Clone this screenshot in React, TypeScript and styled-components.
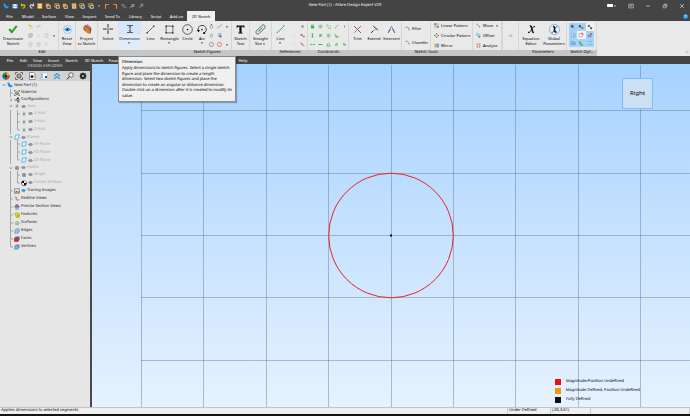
import React from "react";
import styled, { createGlobalStyle } from "styled-components";

const Global = createGlobalStyle`
  * { box-sizing: border-box; }
  html, body, #root { height: 100%; }
  body { margin: 0; overflow: hidden; background: #444444; }
  button { font: inherit; color: inherit; border: 0; padding: 0; margin: 0; background: none; }
`;

/* ---------- icons ---------- */

const art: Record<string, React.ReactNode> = {
  logo: <path d="M1 2c4-2 6 0 7 3s3 3 6 3c2 3 0 6-3 6H7C4 13 2 9 1 2z" fill="#2196f3" />,
  save: <><path d="M1 3h14v11H1z" fill="#6db8f0" /><path d="M4 3h8v4H4zM4 10h8v4H4z" fill="#fff" /></>,
  undo: <path d="M4 1v6h5M4 7c5-4 10-2 9 2-1 3-3 5-6 5" fill="none" stroke="#e2c51c" strokeWidth="3" />,
  redo: <path d="M12 1v6H7M12 7C7 3 2 5 3 9c1 3 3 5 6 5" fill="none" stroke="#d8d8d8" strokeWidth="3" />,
  redoGrey: <path d="M13 2v6H7M13 7C8 3 2 4 3 9c1 3 3 5 6 5" fill="none" stroke="#c3c3c3" strokeWidth="2" />,
  cube: <><path d="M2 2h9v3H5v6H2z" fill="#f5a623" /><path d="M6 6h8v9H6z" fill="none" stroke="#f0e2c0" strokeWidth="2" /><path d="M9 9h3v3H9z" fill="#f5a623" /></>,
  cubeFull: <><path d="M1 1h13v14H1z" fill="#f5b335" /><path d="M3 4h9M4 8h8M3 12h9" stroke="#fff0c8" strokeWidth="2" /></>,
  cubeLine: <><path d="M2 2h10v4M2 2v9h4" fill="none" stroke="#f5a623" strokeWidth="2" /><path d="M6 6h8v8H6z" fill="none" stroke="#eee" strokeWidth="2" /></>,
  cubeRed: <><path d="M2 1h12v8H2z" fill="#f5b335" /><path d="M3 9h11v6H3z" fill="#e7e7e7" /><path d="M6 10h5v3H6z" fill="#d58033" /></>,
  cornerL: <path d="M4 15V4h9" fill="none" stroke="#f08a1d" strokeWidth="3" />,
  cornerR: <path d="M3 4h9v11" fill="none" stroke="#f08a1d" strokeWidth="3" />,
  link: <path d="M3 3l4 2 6 7M2 6l7 7M3 3L2 6M13 12l-3 2" fill="none" stroke="#a9b6bd" strokeWidth="1.6" />,
  wrench: <path d="M2 14l6-6M8 4h5v5H8z" fill="none" stroke="#b9b9b9" strokeWidth="2" />,
  probe: <path d="M2 14l6-6M8 3h5v5H8z" fill="none" stroke="#aaa" strokeWidth="1.8" />,
  down: <path d="M4 6h8l-4 5z" fill="currentColor" />,
  check: <path d="M2 8l4 5 8-10" fill="none" stroke="#2aa336" strokeWidth="3.4" />,
  copy: <path d="M2 5h8v9H2zM6 5V2h8v9h-4M4 10h4" fill="none" stroke="#888" strokeWidth="1.4" />,
  cross: <path d="M4 4l8 8M12 4l-8 8" stroke="#c6c6c6" strokeWidth="1.5" />,
  paste: <path d="M3 3h10v11H3zM6 3V1h4v2M6 7h5M6 10h5" fill="none" stroke="#c3c3c3" strokeWidth="1.5" />,
  page: <><path d="M3 2h10v12H3z" fill="#ddd" stroke="#c3c3c3" strokeWidth="1.3" /><path d="M6 7h4M6 10h4" stroke="#bbb" /></>,
  cut: <path d="M3 4l9 7M3 11l9-7M2 3v2M2 11v2" fill="none" stroke="#c3c3c3" strokeWidth="1.5" />,
  view: <><circle cx="8" cy="8" r="7" fill="#fff" stroke="#79b5e8" strokeWidth="1.4" /><path d="M3 8c3-4 7-4 10 0-3 4-7 4-10 0z" fill="#2d9bf0" stroke="#2872b7" /><circle cx="8" cy="8" r="1.5" fill="#123" /></>,
  project: <><path d="M2 4l4-3 8 6v6l-4 3-8-7z" fill="#e58a1f" /><path d="M5 2l8 7v6" fill="none" stroke="#cc3c2e" strokeWidth="2" /><path d="M3 5l4 4v3L3 8z" fill="#2c76c9" /><path d="M8 1l6 5v5" fill="none" stroke="#35528e" strokeWidth="1.5" /></>,
  select: <><path d="M8 0v6M8 10v6M0 8h6M10 8h6" stroke="#222" strokeWidth="1.5" /><circle cx="8" cy="8" r="1" /></>,
  dimension: <path d="M2 1h12M2 15h12M8 2v12M6 5l2-2 2 2M6 11l2 2 2-2" fill="none" stroke="#222" strokeWidth="1.4" />,
  line: <><path d="M2 14L14 2" stroke="#333" strokeWidth="1.2" /><path d="M1 13h2v2H1zM13 1h2v2h-2z" /></>,
  rect: <><path d="M2 2h12v12H2z" fill="none" stroke="#333" strokeWidth="1.2" /><path d="M1 1h2v2H1zM13 1h2v2h-2zM1 13h2v2H1zM13 13h2v2h-2z" /></>,
  circle: <><circle cx="8" cy="8" r="7" fill="none" stroke="#333" strokeWidth="1.1" /><circle cx="8" cy="8" r="1.1" /></>,
  arc: <><path d="M2 10a6.500 6.500 0 1 1 10 4" fill="none" stroke="#333" strokeWidth="1.4" /><path d="M0 9l2 4 3-3zM10 13h3v3h-3zM7 8h2v2H7z" /></>,
  ellipse: <><ellipse cx="8" cy="9" rx="4" ry="6" fill="none" stroke="#666" strokeWidth="1.4" /><path d="M7 1h2v3H7z" /></>,
  partial: <path d="M11 3C1 2 3 15 11 13M9 8h4" fill="none" stroke="#555" strokeWidth="1.5" />,
  spline: <path d="M1 12c4-9 5 2 8-4 2-4 4-5 6-5M2 14h2M12 2h2" fill="none" stroke="#42a84b" strokeWidth="1.8" />,
  hatch: <><path d="M2 2l5 5-4 4M6 2h6v4" fill="none" stroke="#3880c6" strokeWidth="1.8" /><path d="M7 7h7v7H7z" fill="#596f80" /></>,
  hexagon: <path d="M4 2h8l3 6-3 6H4L1 8z" fill="none" stroke="#444" strokeWidth="1.4" />,
  hexred: <path d="M4 2h8l3 6-3 6H4L1 8z" fill="none" stroke="#e13434" strokeWidth="1.8" />,
  text: <path d="M1 1h14v4h-1c-1-2-2-2-4-2v10c0 1 1 1 2 1v1H4v-1c1 0 2 0 2-1V3C4 3 3 3 2 5H1z" fill="#111" />,
  slot: <><path d="M2 10l8-8c3-2 6 1 4 4l-8 8c-3 2-6-1-4-4z" fill="none" stroke="#555" strokeWidth="1.3" /><path d="M5 11l6-6" stroke="#42a84b" strokeWidth="1.5" /></>,
  refline: <path d="M2 14L14 2M1 13h2M13 1h2" stroke="#35aa43" strokeWidth="1.6" />,
  faintx: <path d="M3 3l3 3M13 3l-3 3M3 13l3-3M13 13l-3-3M8 7v2" stroke="#c6c6c6" strokeWidth="1.3" />,
  point: <><circle cx="8" cy="8" r="4" fill="#aaa" /><path d="M8 3v10M3 8h10" stroke="#777" /></>,
  fig: <><path d="M2 3h6v6H2z" fill="#777" /><path d="M7 8h7v6H7z" fill="#d99a7a" /><path d="M12 10h3v3h-3z" fill="#bb3b3b" /></>,
  fig2: <><path d="M2 2h5v5H2z" fill="#c77" /><path d="M5 8h5v6M9 8l5 6" fill="none" stroke="#777" strokeWidth="1.6" /></>,
  lock: <><path d="M3 7h10v7H3z" fill="#16b930" /><path d="M5 7V3h6v4" fill="none" stroke="#16b930" strokeWidth="2" /></>,
  conc: <><circle cx="8" cy="8" r="5" fill="none" stroke="#2dbd42" strokeWidth="2" /><circle cx="8" cy="8" r="2" fill="#2dbd42" /></>,
  tangent: <path d="M2 10a4 4 0 0 1 6-5M14 5a5 5 0 1 1-7 6M5 3l3 2" fill="none" stroke="#2dbd42" strokeWidth="2" />,
  slash: <path d="M3 13L13 3M3 13h2M13 3v2" fill="none" stroke="#2dbd42" strokeWidth="2" />,
  plus: <path d="M8 5v6" stroke="#2dbd42" strokeWidth="3" />,
  vert: <path d="M8 2v12M5 4h6M5 12h6" stroke="#16b930" strokeWidth="2.4" />,
  neq: <path d="M3 6h10M3 10h10M11 3L5 13" stroke="#16b930" strokeWidth="2" />,
  perp: <path d="M3 3l3 10h9M6 9l7 4" fill="none" stroke="#16b930" strokeWidth="2.2" />,
  horiz: <path d="M1 8h5M9 8h6" stroke="#16b930" strokeWidth="3" />,
  solid: <path d="M2 8h12" stroke="#16b930" strokeWidth="3" />,
  sym: <path d="M4 12V7l4-3 4 3v5M2 13h12" fill="none" stroke="#2dbd42" strokeWidth="2.4" />,
  par: <path d="M4 13l4-10M8 13l4-10" stroke="#2dbd42" strokeWidth="2.2" />,
  arrow: <path d="M3 3l9 5-5 5M9 8l-6 1" fill="none" stroke="#2dbd42" strokeWidth="2.4" />,
  trim: <><path d="M2 2l6 6M14 2L8 8l6 6" fill="none" stroke="#333" strokeWidth="1.3" /><path d="M8 8l-6 6M9 7l3-3" stroke="#d44" strokeWidth="1.3" /></>,
  extend: <><path d="M6 2l8 7M2 14l4-4" stroke="#222" strokeWidth="1.7" /><path d="M6 10l5-4" stroke="#3f91d6" strokeWidth="1.4" /></>,
  intersect: <><path d="M2 14l4-7M14 14l-4-7" stroke="#222" strokeWidth="1.5" /><path d="M5 8l3-6 3 6" fill="none" stroke="#3f91d6" strokeWidth="1.5" /></>,
  fillet: <><path d="M2 4h4M13 10v4" stroke="#333" strokeWidth="2" /><path d="M6 4c5 0 7 2 7 6" fill="none" stroke="#e33" strokeWidth="2" /></>,
  chamfer: <><path d="M2 4h4M13 10v4" stroke="#333" strokeWidth="2" /><path d="M6 4l7 6" stroke="#e33" strokeWidth="2" /></>,
  linpat: <><path d="M1 1h6v6H1zM9 9h6v6H9z" fill="#2378c4" /><path d="M9 1h6v6H9zM1 9h6v6H1z" fill="#f1bd2b" /><path d="M3 3l9 9" stroke="#80bcec" strokeWidth="2" /></>,
  circpat: <><circle cx="8" cy="8" r="5" fill="none" stroke="#e8b62a" strokeWidth="3" /><path d="M8 1v3M8 12v3M1 8h3M12 8h3" stroke="#1f6eb6" strokeWidth="3" /></>,
  mirror: <><path d="M1 2h6v12H1z" fill="#e7b42a" /><path d="M8 2h7v12H8z" fill="#2781cc" /><path d="M10 5h3v6h-3z" fill="#9ed1f4" /></>,
  move: <><path d="M3 2v5M1 4h5M11 10v5M9 12h5" stroke="#58a6dd" strokeWidth="1.5" /><path d="M5 5l7 7" stroke="#555" strokeWidth="1.5" /></>,
  offset: <><path d="M2 2h7l4 5v7H7V8H2z" fill="#d7e7f2" stroke="#58728c" strokeWidth="1.3" /><path d="M9 9h4v4H9z" fill="#2b8dd6" /></>,
  analyze: <path d="M2 3h5M4 3v10M2 13h5M9 3h5M12 3v10M9 13h5" fill="none" stroke="#ce4e4e" strokeWidth="2" />,
  folder: <path d="M2 6h5l1-2h6v9H2z" fill="#c8c8c8" />,
  equation: <><path d="M5 2c3-1 3 3 4 6s1 6 3 5" fill="none" stroke="#111" strokeWidth="2.8" /><path d="M14 3c-2-2-4 2-6 5s-4 7-6 5" fill="none" stroke="#111" strokeWidth="1.4" /><path d="M12 2h2v2h-2zM2 12h2v2H2z" /></>,
  global: <><circle cx="8" cy="8" r="7.3" fill="#e8f2fb" stroke="#5b9bd5" /><path d="M6 4c2-1 2 2 2 4s1 4 3 4" fill="none" stroke="#111" strokeWidth="2.2" /><path d="M12 4c-2-1-3 2-4 4s-2 5-4 4" fill="none" stroke="#111" strokeWidth="1.1" /></>,
  opt1: <path d="M3 3h6v6H3zM10 12h4" fill="#345" stroke="#5a7da0" />,
  opt2: <><path d="M2 3h6v6H2z" fill="#456" /><path d="M9 8h5v5H9z" fill="#d44" /></>,
  opt3: <path d="M3 3h4v4H3zM9 9h4v4H9zM7 7l2 2" fill="#444" stroke="#444" />,
  opt4: <path d="M3 3h7v9H3zM9 7h5v6H9z" fill="#d8e9f5" stroke="#4c8abb" />,
  opt5: <><path d="M3 4h8v9H3z" fill="#fff" stroke="#555" /><path d="M8 3l5 1v5" fill="none" stroke="#d33" strokeWidth="2" /></>,
  opt6: <><path d="M3 13l8-9M3 8h8v5H3z" fill="#9bb" stroke="#567" /><path d="M9 3l5 4" stroke="#d33" strokeWidth="3" /></>,
  opt7: <><circle cx="6" cy="8" r="4" fill="none" stroke="#357ba9" strokeWidth="1.5" /><path d="M10 7h5v5h-5z" fill="none" stroke="#357ba9" /></>,
  opt8: <path d="M4 3l2 10 7 1L5 8M4 3l4 8" fill="none" stroke="#24a447" strokeWidth="1.8" />,
  opt9: <path d="M2 4h4M8 4h5M3 12h3M9 12h5" stroke="#578fc0" strokeWidth="1.6" />,
  wheel: <><circle cx="8" cy="8" r="7" fill="#1c9b50" /><path d="M8 8V1a7 7 0 0 1 7 7z" fill="#f0c22d" /><path d="M8 8h7a7 7 0 0 1-7 7z" fill="#e4482e" /><path d="M8 8v7a7 7 0 0 1-7-7z" fill="#2677c6" /><path d="M8 1v14M1 8h14" stroke="#222" strokeWidth="1.2" /><circle cx="8" cy="8" r="2" fill="#222" /></>,
  material: <><path d="M1 5V1h4M11 1h4v4M15 11v4h-4M5 15H1v-4" fill="none" stroke="#444" strokeWidth="1.5" /><circle cx="8" cy="8" r="5" fill="#3d6c8c" /><path d="M6 5h5v3l-3 4-3-4z" fill="#e9a22b" /></>,
  doc: <><path d="M3 1h8l3 3v11H3z" fill="#fff" stroke="#555" strokeWidth="1.2" /><circle cx="8" cy="9" r="3" fill="#222" /></>,
  window: <><path d="M1 2h14v12H1z" fill="#fff" stroke="#8bbad9" /><path d="M2 3h4v10H2z" fill="#8fc5ea" /><path d="M10 8h4v4h-4z" fill="#444" /></>,
  upup: <path d="M2 8l6-5 6 5M2 14l6-5 6 5" fill="none" stroke="#2c9aeb" strokeWidth="2.2" />,
  search: <><circle cx="10" cy="6" r="4.5" fill="#eee" stroke="#333" strokeWidth="1.3" /><path d="M7 9l-5 6" stroke="#333" strokeWidth="2" /></>,
  gear: <><circle cx="8" cy="8" r="4" fill="none" stroke="#222" strokeWidth="4" /><path d="M8 1v3M8 12v3M1 8h3M12 8h3M3 3l2 2M11 11l2 2M13 3l-2 2M5 11l-2 2" stroke="#222" strokeWidth="2" /></>,
  config: <><path d="M1 8h5l3-5M6 8h3l2 5" fill="none" stroke="#333" strokeWidth="1.8" /><path d="M8 1h5v4H8z" fill="#333" /><path d="M10 6h5v4h-5z" fill="#278b5b" /><path d="M9 11h5v4H9z" fill="#c04141" /></>,
  axis: <><path d="M8 2v12" stroke="#6db87e" strokeWidth="1.6" /><path d="M3 4l10 8" stroke="#e29a83" strokeWidth="1.6" /><path d="M3 12l10-8" stroke="#58b1e8" strokeWidth="1.6" /><circle cx="8" cy="8" r="2" fill="#477" /></>,
  plane: <path d="M4 3l10-1-2 11-10 1z" fill="#e5f5fc" stroke="#3aa7e4" strokeWidth="2" />,
  eye: <path d="M1 8c4-5 10-5 14 0-4 5-10 5-14 0z" fill="#8e999b" stroke="#666" />,
  eyeblue: <path d="M1 8c4-5 10-5 14 0-4 5-10 5-14 0z" fill="#2d9eec" stroke="#2383c6" />,
  points: <path d="M4 4h8v8H4zM3 8h10M8 3v10" fill="#aaa" stroke="#666" />,
  mass: <><circle cx="8" cy="8" r="7" /><path d="M8 2v6h6a6 6 0 0 0-6-6zM8 8v6a6 6 0 0 1-6-6z" fill="#fff" /></>,
  image: <><path d="M1 2h14v12H1z" fill="#f4deb3" stroke="#555" strokeWidth="1.5" /><path d="M2 12l4-5 3 3 2-2 3 4z" fill="#477" /></>,
  redline: <><path d="M2 2l5 2-2 5 5 1" fill="none" stroke="#d33" strokeWidth="1.8" /><path d="M8 13l6-4" stroke="#69a4c5" strokeWidth="3" /></>,
  section: <><circle cx="8" cy="5" r="5" fill="#ed604d" /><path d="M1 5h14v4H1z" fill="#3180d1" /><path d="M4 9h3v6H4zM9 9h3v6H9z" fill="#5f96d0" /></>,
  feature: <><path d="M1 4l6-3 8 4v8l-8 2z" fill="#e7d329" stroke="#858131" /><path d="M7 7l8-2v8l-8 2z" fill="#c0b91f" /></>,
  surface: <path d="M2 9l6-6 3 3-6 6zM7 11l5-5 3 3-6 5z" fill="#d3eed5" stroke="#39984a" strokeWidth="1.5" />,
  edge: <><path d="M2 5l4-3h8v8l-4 4H2z" fill="#8ecbee" stroke="#406f99" /><path d="M2 5h8v9" fill="none" stroke="#d98a8a" strokeWidth="1.5" /></>,
  face: <><path d="M1 5l4-4h10v9l-4 5H1z" fill="#3776a5" /><path d="M1 5h10v10H1z" fill="#ef2118" /></>,
  vertex: <><path d="M2 5l4-3h8v8l-4 4H2z" fill="#66b7e7" stroke="#28658d" /><path d="M9 4h3v3H9z" fill="#d33" /></>,
  open: <path d="M3 5l5 6 5-6" fill="none" stroke="#333" strokeWidth="2" />,
  closed: <path d="M5 3l6 5-6 5" fill="none" stroke="#333" strokeWidth="2" />,
  restore: <path d="M3 6h7v7H3zM6 6V3h7v7h-3" fill="none" stroke="#ddd" strokeWidth="1.6" />,
  close: <path d="M3 3l10 10M13 3L3 13" stroke="#ddd" strokeWidth="1.8" />,
  min: <path d="M3 8h10" stroke="#ddd" strokeWidth="1.8" />,
  full: <path d="M2 3h12v10H2zM5 7h6M8 7v4" fill="none" stroke="#ddd" strokeWidth="1.6" />,
  chevup: <path d="M3 11l5-5 5 5" fill="none" stroke="#444" strokeWidth="2" />,
};

const Glyph = styled.svg<{ $s: number }>`
  display: block;
  flex: none;
  width: ${(p) => p.$s}px;
  height: ${(p) => p.$s}px;
`;
const Icon = ({ n, s = 6 }: { n: string; s?: number }) => (
  <Glyph $s={s} viewBox="0 0 16 16" aria-hidden="true">{art[n]}</Glyph>
);

/* ---------- frame ---------- */

const Page = styled.div`
  display: flex;
  flex-direction: column;
  min-height: 100%;
  font: 400 4px/5px "Noto Sans", "Open Sans", sans-serif;
  text-rendering: geometricPrecision;
  color: #000000;
  white-space: nowrap;
`;
const TitleBar = styled.header`
  display: grid;
  grid-template-columns: 1fr auto 1fr;
  align-items: center;
  height: 11px;
  background: #444444;
  color: #ffffff;
`;
const Quick = styled.div`
  display: grid;
  grid-template-columns: repeat(11, 1fr) 8px repeat(5, 1fr);
  justify-items: center;
  width: 145px;
  padding-left: 2px;
`;
const Controls = styled.div`
  display: flex;
  justify-content: flex-end;
  align-items: center;
  gap: 11px;
  padding-right: 5px;
`;
const Account = styled.button`
  display: flex;
  align-items: center;
  &::before { content: ""; width: 6px; height: 3px; background: #ffffff; }
`;
const TabRow = styled.nav`
  display: flex;
  align-items: stretch;
  height: 10px;
  background: #444444;
  color: #ffffff;
  padding: 0 2px 0 1px;
`;
const Tab = styled.button<{ $w: number; $on?: boolean }>`
  flex: none;
  width: ${(p) => p.$w}px;
  background: ${(p) => (p.$on ? "#f0f0f0" : "transparent")};
  color: ${(p) => (p.$on ? "#000000" : "inherit")};
`;
const HelpButton = styled.button`
  align-self: center;
  margin-left: auto;
  width: 5px;
  height: 5px;
  border-radius: 50%;
  background: #1597f0;
  color: #ffffff;
  font-weight: 700;
`;

/* ---------- ribbon ---------- */

const Ribbon = styled.div`
  display: flex;
  height: 35px;
  background: #e9e9e9;
`;
const Group = styled.section<{ $w: number }>`
  display: flex;
  flex-direction: column;
  flex: none;
  width: ${(p) => p.$w}px;
`;
const GroupBody = styled.div`
  display: flex;
  flex: 1;
  border-right: 1px solid #d6d6d6;
`;
const GroupLabel = styled.div<{ $l?: number; $r?: number }>`
  height: 6px;
  background: #c6c6c6;
  text-align: center;
  line-height: 6px;
  padding-left: ${(p) => p.$l ?? 0}px;
  padding-right: ${(p) => p.$r ?? 0}px;
`;
const ToolButton = styled.button<{ $w: number; $on?: boolean; $sep?: boolean }>`
  display: flex;
  flex-direction: column;
  align-items: center;
  flex: none;
  width: ${(p) => p.$w}px;
  padding-top: 3px;
  background: ${(p) => (p.$on ? "linear-gradient(#d6e6fa 50%, #e2ecf8 50%)" : "transparent")};
  border-right: ${(p) => (p.$sep ? "1px solid #d6d6d6" : "0")};
`;
const ToolIcon = styled.span`
  display: grid;
  place-items: center;
  height: 10px;
`;
const ToolText = styled.span`
  display: flex;
  flex-direction: column;
  align-items: center;
  margin-top: 2px;
`;
const Inline = styled.span`
  display: flex;
  align-items: center;
`;
const IconGrid = styled.div<{ $cols: number; $w: number; $sep?: boolean }>`
  display: grid;
  grid-template-columns: repeat(${(p) => p.$cols}, 1fr);
  grid-template-rows: repeat(3, 9px);
  flex: none;
  width: ${(p) => p.$w}px;
  padding-top: 1px;
  border-right: ${(p) => (p.$sep ? "1px solid #d6d6d6" : "0")};
`;
const SmallButton = styled.button`
  display: grid;
  place-items: center;
`;
const ListColumn = styled.div<{ $w: number }>`
  display: flex;
  flex-direction: column;
  justify-content: space-around;
  flex: none;
  width: ${(p) => p.$w}px;
  padding: 0 0 0 3px;
  border-right: 1px solid #d6d6d6;
`;
const ListButton = styled.button`
  display: flex;
  align-items: center;
  gap: 2px;
`;
const Toggles = styled.div`
  display: grid;
  grid-template-columns: repeat(3, 1fr);
  grid-template-rows: repeat(3, 8px);
  width: 30px;
  padding: 2px;
`;
const Toggle = styled.button<{ $on: boolean }>`
  display: grid;
  place-items: center;
  background: ${(p) => (p.$on ? "#a5d3f7" : "#f3f3f3")};
`;
const Collapse = styled.button`
  align-self: flex-end;
  margin: 0 1px 2px auto;
`;

type ToolProps = { w: number; icon: string; size?: number; lines: string[]; on?: boolean; sep?: boolean; caret?: "below" | "side" };
const Tool = ({ w, icon, size = 9, lines, on, sep, caret }: ToolProps) => (
  <ToolButton $w={w} $on={on} $sep={sep}>
    <ToolIcon><Icon n={icon} s={size} /></ToolIcon>
    <ToolText>
      {lines.map((t, i) => (
        <Inline key={t}>{t}{caret === "side" && i === lines.length - 1 && <Icon n="down" s={4} />}</Inline>
      ))}
      {caret === "below" && <Icon n="down" s={4} />}
    </ToolText>
  </ToolButton>
);
const Smalls = ({ items, cols, w, sep, s = 5 }: { items: string[]; cols: number; w: number; sep?: boolean; s?: number }) => (
  <IconGrid $cols={cols} $w={w} $sep={sep}>
    {items.map((n, i) => (n ? <SmallButton key={i} aria-label={n}><Icon n={n} s={n === "down" ? 4 : s} /></SmallButton> : <span key={i} />))}
  </IconGrid>
);
const List = ({ w, items }: { w: number; items: [string, string][] }) => (
  <ListColumn $w={w}>
    {items.map(([icon, label]) => (
      <ListButton key={label}><Icon n={icon} s={5} />{label}{label === "Move" && <Icon n="down" s={4} />}</ListButton>
    ))}
  </ListColumn>
);

/* ---------- menu and workspace ---------- */

const MenuBar = styled.nav`
  display: flex;
  align-items: center;
  height: 8px;
  background: #444444;
  color: #ffffff;
  padding-left: 3px;
`;
const MenuItem = styled.button<{ $w: number }>`
  flex: none;
  width: ${(p) => p.$w}px;
`;
const Workspace = styled.main`
  display: flex;
  flex: 1;
  min-height: 0;
`;
const Explorer = styled.aside`
  flex: none;
  width: 92px;
  background: #e6e6e6;
  border-right: 2px solid #4a4a4a;
`;
const ExplorerTitle = styled.h2`
  margin: 0;
  height: 7px;
  font: inherit;
  line-height: 6px;
  text-align: center;
  background: #444444;
  color: #d0d0d0;
`;
const ExplorerTools = styled.div`
  display: flex;
  align-items: center;
  justify-content: space-between;
  height: 10px;
  padding: 0 3px 0 2px;
  background: #d2d2d2;
`;
const Tree = styled.ul`
  display: grid;
  grid-auto-rows: 1fr;
  height: 170px;
  margin: 0;
  padding: 1px 0 0 1px;
  list-style: none;
`;
const Row = styled.li<{ $dim?: boolean }>`
  display: flex;
  align-items: center;
  color: ${(p) => (p.$dim ? "#a8a8a8" : "#222222")};
`;
const Guide = styled.span<{ $line: boolean }>`
  align-self: stretch;
  width: 7px;
  padding-left: 2px;
  &::before {
    content: "";
    display: block;
    width: 1px;
    height: 100%;
    background: ${(p) => (p.$line ? "#a6a6a6" : "transparent")};
  }
`;
const Joint = styled.span`
  display: grid;
  place-items: center;
  align-self: stretch;
  width: 5px;
`;
const JointArt = styled.svg`
  display: block;
  width: 5px;
  height: 100%;
`;
const IconCell = styled.span<{ $w: number }>`
  display: grid;
  place-items: center;
  flex: none;
  width: ${(p) => p.$w}px;
`;
const RowText = styled.span`
  margin-left: 1px;
`;

type Node = { t: string; i: string; l: number; open?: boolean; shut?: boolean; dim?: boolean; eye?: string; last?: boolean };
const nodes: Node[] = [
  { t: "New Part (1)", i: "logo", l: 0, open: true },
  { t: "Material", i: "material", l: 1 },
  { t: "Configurations", i: "config", l: 1, shut: true },
  { t: "Axes", i: "axis", l: 1, open: true, dim: true, eye: "eye" },
  { t: "X-Axis", i: "axis", l: 2, dim: true, eye: "eye" },
  { t: "Y-Axis", i: "axis", l: 2, dim: true, eye: "eye" },
  { t: "Z-Axis", i: "axis", l: 2, dim: true, eye: "eye", last: true },
  { t: "Planes", i: "plane", l: 1, open: true, dim: true, eye: "eye" },
  { t: "XY-Plane", i: "plane", l: 2, dim: true, eye: "eye" },
  { t: "YZ-Plane", i: "plane", l: 2, dim: true, eye: "eye" },
  { t: "ZX-Plane", i: "plane", l: 2, dim: true, eye: "eye", last: true },
  { t: "Points", i: "points", l: 1, open: true, dim: true, eye: "eye" },
  { t: "Origin", i: "points", l: 2, dim: true, eye: "eye" },
  { t: "Center of Mass", i: "mass", l: 2, dim: true, eye: "eye", last: true },
  { t: "Tracing Images", i: "image", l: 1, eye: "eyeblue" },
  { t: "Redline Views", i: "redline", l: 1 },
  { t: "Precise Section Views", i: "section", l: 1 },
  { t: "Features", i: "feature", l: 1 },
  { t: "Surfaces", i: "surface", l: 1 },
  { t: "Edges", i: "edge", l: 1 },
  { t: "Faces", i: "face", l: 1 },
  { t: "Vertices", i: "vertex", l: 1, last: true },
];

const TreeRow = ({ n }: { n: Node }) => (
  <Row $dim={n.dim}>
    {Array.from({ length: n.l }, (_, i) => <Guide key={i} $line={i === 1} />)}
    <Joint>
      {n.open || n.shut ? <Icon n={n.open ? "open" : "closed"} s={4} /> : (
        <JointArt viewBox="0 0 5 8" preserveAspectRatio="none" aria-hidden="true">
          <path d={n.last ? "M2.5 0V4H5" : "M2.5 0V8M2.5 4H5"} fill="none" stroke="#a6a6a6" />
        </JointArt>
      )}
    </Joint>
    <IconCell $w={7}><Icon n={n.i} s={6} /></IconCell>
    {n.eye && <IconCell $w={6}><Icon n={n.eye} s={5} /></IconCell>}
    <RowText>{n.t}</RowText>
  </Row>
);

const Canvas = styled.section`
  position: relative;
  flex: 1;
  min-width: 0;
  border-top: 1px solid #8fdcff;
  background: linear-gradient(#a7d2ff, #e6f2ff);
`;
const Drawing = styled.svg`
  position: absolute;
  inset: 0;
  width: 100%;
  height: 100%;
`;
const ViewCube = styled.button`
  position: absolute;
  top: 13px;
  right: 37px;
  width: 31px;
  height: 31px;
  border: 1px solid #7ebcf8;
  background: #cce0f3;
  font-size: 6px;
`;
const Legend = styled.ul`
  position: absolute;
  right: 50px;
  bottom: 3px;
  width: 85px;
  margin: 0;
  padding: 0;
  list-style: none;
`;
const LegendItem = styled.li<{ $c: string }>`
  display: flex;
  align-items: center;
  height: 9px;
  gap: 5px;
  &::before { content: ""; width: 6px; height: 6px; background: ${(p) => p.$c}; }
`;
const Tooltip = styled.div`
  position: absolute;
  z-index: 2;
  left: 26px;
  top: -9px;
  width: 118px;
  height: 46px;
  padding: 3px;
  background: #f0f0f0;
  border: 1px solid #8d8d8d;
  box-shadow: 1px 1px 1px #0004;
`;
const TooltipBody = styled.div`
  display: grid;
  grid-auto-rows: 1fr;
  height: 33px;
  margin-top: 1px;
  align-items: center;
`;
const TooltipTitle = styled.strong`
  display: block;
  font-weight: 500;
`;
const StatusBar = styled.footer`
  display: flex;
  height: 9px;
  line-height: 6px;
  background: #f0f0f0;
  border-top: 1px solid #c4c4c4;
  border-bottom: 2px solid #151515;
`;
const StatusCell = styled.span<{ $w?: number }>`
  flex: ${(p) => (p.$w ? `0 0 ${p.$w}px` : "1")};
  padding-left: 1px;
  border-right: 1px solid #cccccc;
`;

const tabs: [string, number][] = [["File", 17], ["Model", 20], ["Surface", 22], ["View", 19], ["Inspect", 21], ["Send To", 25], ["Library", 21], ["Script", 20], ["Add-on", 21]];
const menus: [string, number][] = [["File", 14], ["Edit", 13], ["View", 15], ["Insert", 17], ["Sketch", 19], ["3D Sketch", 26], ["Feature", 18], ["", 112], ["Help", 12]];
const quick = ["logo", "save", "undo", "redo", "cubeFull", "cube", "cubeLine", "cube", "cubeRed", "cubeLine", "cubeLine", "down", "cornerL", "cornerR", "link", "wrench", "probe"];
const tip = [
  "Apply dimensions to sketch figures. Select a single sketch",
  "figure and place the dimension to create a length",
  "dimension. Select two sketch figures and place the",
  "dimension to create an angular or distance dimension.",
  "Double click on a dimension after it is created to modify its",
  "value.",
];
const gx = [49, 111, 174, 236, 299, 361, 423, 486, 548];
const gy = [45, 108, 170, 232, 295];

export default function App() {
  return (
    <Page>
      <Global />
      <TitleBar>
        <Quick>{quick.map((n, i) => <SmallButton key={i} aria-label={n}><Icon n={n} s={n === "down" ? 4 : 6} /></SmallButton>)}</Quick>
        <span>New Part (1) - Alibre Design Expert V29</span>
        <Controls>
          <Account aria-label="Account"><Icon n="down" s={4} /></Account>
          {["full", "min", "restore", "close"].map((n) => <SmallButton key={n} aria-label={n}><Icon n={n} s={6} /></SmallButton>)}
        </Controls>
      </TitleBar>
      <TabRow>
        {tabs.map(([t, w]) => <Tab key={t} $w={w}>{t}</Tab>)}
        <Tab $w={28} $on>2D Sketch</Tab>
        <HelpButton>?</HelpButton>
      </TabRow>
      <Ribbon>
        <Group $w={98}>
          <GroupBody>
            <Tool w={26} icon="check" size={10} lines={["Deactivate", "Sketch"]} />
            <Smalls cols={4} w={33} sep items={["undo", "redoGrey", "", "", "copy", "cross", "paste", "down", "page", "page", "cut", ""]} />
            <Tool w={17} icon="view" sep lines={["Reset", "View"]} />
            <Tool w={21} icon="project" size={10} lines={["Project", "to Sketch"]} />
          </GroupBody>
          <GroupLabel $r={14}>Edit</GroupLabel>
        </Group>
        <Group $w={174}>
          <GroupBody>
            <Tool w={20} icon="select" size={10} lines={["Select"]} />
            <Tool w={23} icon="dimension" size={8} on lines={["Dimension"]} caret="below" />
            <Tool w={19} icon="line" lines={["Line"]} />
            <Tool w={19} icon="rect" lines={["Rectangle"]} caret="below" />
            <Tool w={17} icon="circle" size={11} lines={["Circle"]} />
            <Tool w={12} icon="arc" size={10} lines={["Arc"]} caret="below" />
            <Smalls cols={3} w={24} sep items={["ellipse", "spline", "down", "partial", "hatch", "", "hexagon", "hexred", "down"]} />
            <Tool w={18} icon="text" sep lines={["Sketch", "Text"]} />
            <Tool w={21} icon="slot" size={11} lines={["Straight", "Slot"]} caret="side" />
          </GroupBody>
          <GroupLabel $l={44}>Sketch Figures</GroupLabel>
        </Group>
        <Group $w={36}>
          <GroupBody>
            <Tool w={17} icon="refline" lines={["Line"]} caret="below" />
            <Smalls cols={2} w={18} items={["", "point", "faintx", "fig", "faintx", "fig2"]} />
          </GroupBody>
          <GroupLabel>References</GroupLabel>
        </Group>
        <Group $w={41}>
          <GroupBody>
            <Smalls cols={5} w={40} s={5} items={["lock", "conc", "tangent", "slash", "plus", "vert", "neq", "conc", "perp", "", "horiz", "solid", "sym", "par", "arrow"]} />
          </GroupBody>
          <GroupLabel>Constraints</GroupLabel>
        </Group>
        <Group $w={154}>
          <GroupBody>
            <Tool w={17} icon="trim" lines={["Trim"]} />
            <Tool w={16} icon="extend" lines={["Extend"]} />
            <Tool w={20} icon="intersect" sep lines={["Intersect"]} />
            <List w={29} items={[["fillet", "Fillet"], ["chamfer", "Chamfer"]]} />
            <List w={42} items={[["linpat", "Linear Pattern"], ["circpat", "Circular Pattern"], ["mirror", "Mirror"]]} />
            <List w={29} items={[["move", "Move"], ["offset", "Offset"], ["analyze", "Analyze"]]} />
          </GroupBody>
          <GroupLabel>Sketch Tools</GroupLabel>
        </Group>
        <Group $w={16}>
          <GroupBody>
            <Smalls cols={1} w={15} items={["", "folder", ""]} />
          </GroupBody>
          <GroupLabel />
        </Group>
        <Group $w={48}>
          <GroupBody>
            <Tool w={24} icon="equation" lines={["Equation", "Editor"]} />
            <Tool w={22} icon="global" size={11} lines={["Global", "Parameters"]} />
          </GroupBody>
          <GroupLabel>Parameters</GroupLabel>
        </Group>
        <Group $w={30}>
          <GroupBody>
            <Toggles>
              {[1, 2, 3, 4, 5, 6, 7, 8, 9].map((k) => (
                <Toggle key={k} $on={k !== 3 && k !== 5} aria-label={`Option ${k}`} aria-pressed={k !== 3 && k !== 5}><Icon n={`opt${k}`} s={6} /></Toggle>
              ))}
            </Toggles>
          </GroupBody>
          <GroupLabel>Sketch Opt...</GroupLabel>
        </Group>
        <Collapse aria-label="Collapse ribbon"><Icon n="chevup" s={4} /></Collapse>
      </Ribbon>
      <MenuBar>
        {menus.map(([t, w]) => (t ? <MenuItem key={t} $w={w}>{t}</MenuItem> : <MenuItem as="span" key="gap" $w={w} />))}
      </MenuBar>
      <Workspace>
        <Explorer>
          <ExplorerTitle>DESIGN EXPLORER</ExplorerTitle>
          <ExplorerTools>
            {["wheel", "material", "doc", "window", "upup", "search", "gear"].map((n) => <SmallButton key={n} aria-label={n}><Icon n={n} s={8} /></SmallButton>)}
          </ExplorerTools>
          <Tree>{nodes.map((n) => <TreeRow key={n.t} n={n} />)}</Tree>
        </Explorer>
        <Canvas>
          <Drawing viewBox="0 0 598 342" preserveAspectRatio="xMidYMid slice" role="img" aria-label="Circle sketch on a grid">
            <g stroke="#56697c" strokeOpacity="0.4">
              {gx.map((x) => <path key={x} d={`M${x + 0.5} 0V342`} />)}
              {gy.map((y) => <path key={y} d={`M49 ${y + 0.5}H598`} />)}
            </g>
            <circle cx="299" cy="170.5" r="62.3" fill="none" stroke="#ee2222" />
            <path d="M298 169.500h2v2h-2z" fill="#000" />
          </Drawing>
          <Tooltip role="tooltip">
            <TooltipTitle>Dimension</TooltipTitle>
            <TooltipBody>{tip.map((t) => <span key={t}>{t}</span>)}</TooltipBody>
          </Tooltip>
          <ViewCube>Right</ViewCube>
          <Legend>
            <LegendItem $c="#ee1111">Magnitude/Position Undefined</LegendItem>
            <LegendItem $c="#f49412">Magnitude Defined, Position Undefined</LegendItem>
            <LegendItem $c="#111111">Fully Defined</LegendItem>
          </Legend>
        </Canvas>
      </Workspace>
      <StatusBar>
        <StatusCell>Applies dimensions to selected segments</StatusCell>
        <StatusCell $w={43}>Under Defined</StatusCell>
        <StatusCell $w={40}>(.00,3.61)</StatusCell>
        <StatusCell $w={99} />
      </StatusBar>
    </Page>
  );
}
